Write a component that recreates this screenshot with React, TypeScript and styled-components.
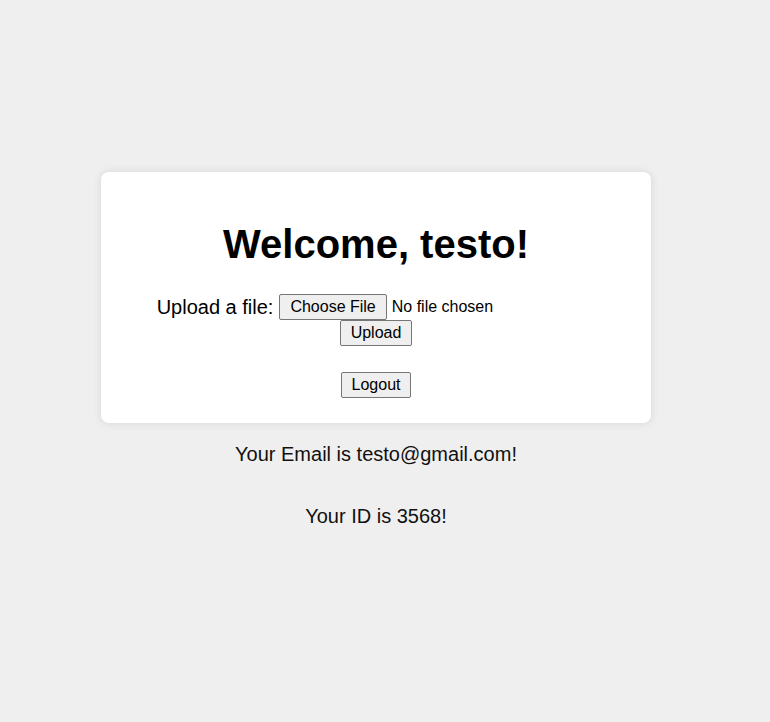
import React from "react";
import styled, { createGlobalStyle } from "styled-components";

const GlobalStyle = createGlobalStyle`
  html, body {
    margin: 0;
    padding: 0;
    background: #efefef;
    font-family: "Liberation Sans", Arial, sans-serif;
    color: #000;
  }
`;

const Page = styled.div`
  width: 752px;
  min-height: 722px;
  display: flex;
  flex-direction: column;
  align-items: center;
  justify-content: center;
  box-sizing: border-box;
  padding-bottom: 2px;
`;

const Card = styled.div`
  width: 550px;
  box-sizing: border-box;
  background: #ffffff;
  border-radius: 8px;
  box-shadow: 0 0 10px rgba(0, 0, 0, 0.1);
  padding: 20px 20px 25px;
  display: flex;
  flex-direction: column;
  align-items: center;
`;

const Title = styled.h1`
  font-size: 40px;
  font-weight: bold;
  line-height: 46px;
  margin: 29px 0 27px;
  text-align: center;
`;

const UploadForm = styled.form`
  display: flex;
  flex-direction: column;
  align-items: center;
`;

const FileRow = styled.div`
  display: flex;
  align-items: center;
  gap: 6px;
  height: 26px;
`;

const Label = styled.label`
  font-size: 20px;
  line-height: 23px;
`;

const FileInput = styled.input`
  width: 316px;
  font-family: "Liberation Sans", Arial, sans-serif;
  font-size: 16px;
  color: #000;
  padding: 0;
  margin: 0;

  &::file-selector-button {
    font-family: "Liberation Sans", Arial, sans-serif;
    font-size: 16px;
    line-height: 18px;
    color: #000;
    background: #efefef;
    border: 1px solid #767676;
    border-radius: 2px;
    padding: 3px 10px;
    margin: 0 5px 0 0;
  }
`;

const Button = styled.button<{ $top?: number; $pad?: number }>`
  font-family: "Liberation Sans", Arial, sans-serif;
  font-size: 16px;
  line-height: 18px;
  color: #000;
  background: #efefef;
  border: 1px solid #767676;
  border-radius: 2px;
  padding: 3px ${(p) => p.$pad ?? 9}px;
  margin: ${(p) => p.$top ?? 0}px 0 0;
  cursor: pointer;
`;

const Info = styled.p<{ $top: number }>`
  font-size: 20px;
  line-height: 23px;
  margin: ${(p) => p.$top}px 0 0;
  color: #111;
  text-align: center;
`;

export default function App() {
  return (
    <>
      <GlobalStyle />
      <Page>
        <Card>
          <Title>Welcome, testo!</Title>
          <UploadForm onSubmit={(e) => e.preventDefault()}>
            <FileRow>
              <Label htmlFor="file">Upload a file:</Label>
              <FileInput id="file" type="file" />
            </FileRow>
            <Button type="submit" $pad={10}>
              Upload
            </Button>
          </UploadForm>
          <Button $top={26} $pad={10}>
            Logout
          </Button>
        </Card>
        <Info $top={20}>Your Email is testo@gmail.com!</Info>
        <Info $top={39}>Your ID is 3568!</Info>
        <Info $top={20} aria-hidden="true" style={{ visibility: "hidden", height: 0 }} />
      </Page>
    </>
  );
}
